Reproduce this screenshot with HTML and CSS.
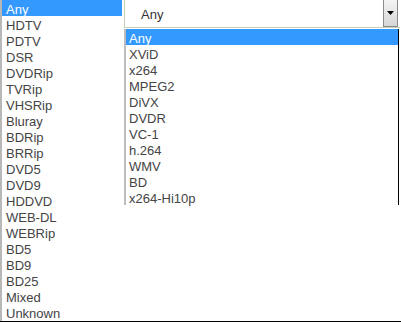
FILE: index.html
```html
<!DOCTYPE html>
<html>
<head>
<meta charset="utf-8">
<link rel="stylesheet" href="styles.css">
</head>
<body>
<div class="page">
  <ul class="listbox">
    <li class="sel">Any</li>
    <li>HDTV</li>
    <li>PDTV</li>
    <li>DSR</li>
    <li>DVDRip</li>
    <li>TVRip</li>
    <li>VHSRip</li>
    <li>Bluray</li>
    <li>BDRip</li>
    <li>BRRip</li>
    <li>DVD5</li>
    <li>DVD9</li>
    <li>HDDVD</li>
    <li>WEB-DL</li>
    <li>WEBRip</li>
    <li>BD5</li>
    <li>BD9</li>
    <li>BD25</li>
    <li>Mixed</li>
    <li>Unknown</li>
  </ul>
  <div class="right">
    <div class="select">
      <span class="value">Any</span>
      <span class="arrow"><svg width="7" height="4" viewBox="0 0 7 4"><path d="M0 0H7L3.5 4Z" fill="#000"/></svg></span>
    </div>
    <ul class="popup">
      <li class="sel">Any</li>
      <li>XViD</li>
      <li>x264</li>
      <li>MPEG2</li>
      <li>DiVX</li>
      <li>DVDR</li>
      <li>VC-1</li>
      <li>h.264</li>
      <li>WMV</li>
      <li>BD</li>
      <li>x264-Hi10p</li>
    </ul>
  </div>
</div>
</body>
</html>
```
FILE: styles.css
```css
html, body {
  margin: 0;
  padding: 0;
  background: #fff;
}
.page {
  display: flex;
  width: 401px;
  height: 322px;
  box-sizing: border-box;
  border-bottom: 1px solid #000;
  font-family: "Liberation Sans", Arial, sans-serif;
  font-size: 13px;
  color: #444;
}
ul {
  list-style: none;
  margin: 0;
  padding: 0;
}
li {
  height: 16px;
  line-height: 16px;
  box-sizing: border-box;
  padding-top: 2px;
  line-height: 15px;
  white-space: nowrap;
}
.listbox {
  width: 122px;
  border-left: 2px solid #b8b8b8;
  box-sizing: border-box;
}
.listbox li {
  padding-left: 4px;
}
.sel {
  background: #3399ff;
  color: #fff;
}
.right {
  margin-left: 2px;
  width: 276px;
  display: flex;
  flex-direction: column;
}
.select {
  height: 28px;
  box-sizing: border-box;
  border-left: 1px solid #c6d0b4;
  border-bottom: 1px solid #c6d0b4;
  display: flex;
  align-items: center;
  justify-content: space-between;
  padding-left: 16px;
  padding-right: 2px;
  color: #333;
}
.value {
  margin-top: 1px;
}
.arrow {
  width: 15px;
  height: 27px;
  box-sizing: border-box;
  margin-top: -1px;
  border: 1px solid #8a8a8a;
  border-top: none;
  background: linear-gradient(#f4f4f4, #d6d6d6);
  display: flex;
  align-items: center;
  justify-content: center;
}
.popup {
  margin-top: 1px;
  width: 275px;
  box-sizing: border-box;
  border-left: 2px solid #bdbdbd;
  border-right: 1px solid #000;
}
.popup li {
  padding-left: 3px;
}
```
